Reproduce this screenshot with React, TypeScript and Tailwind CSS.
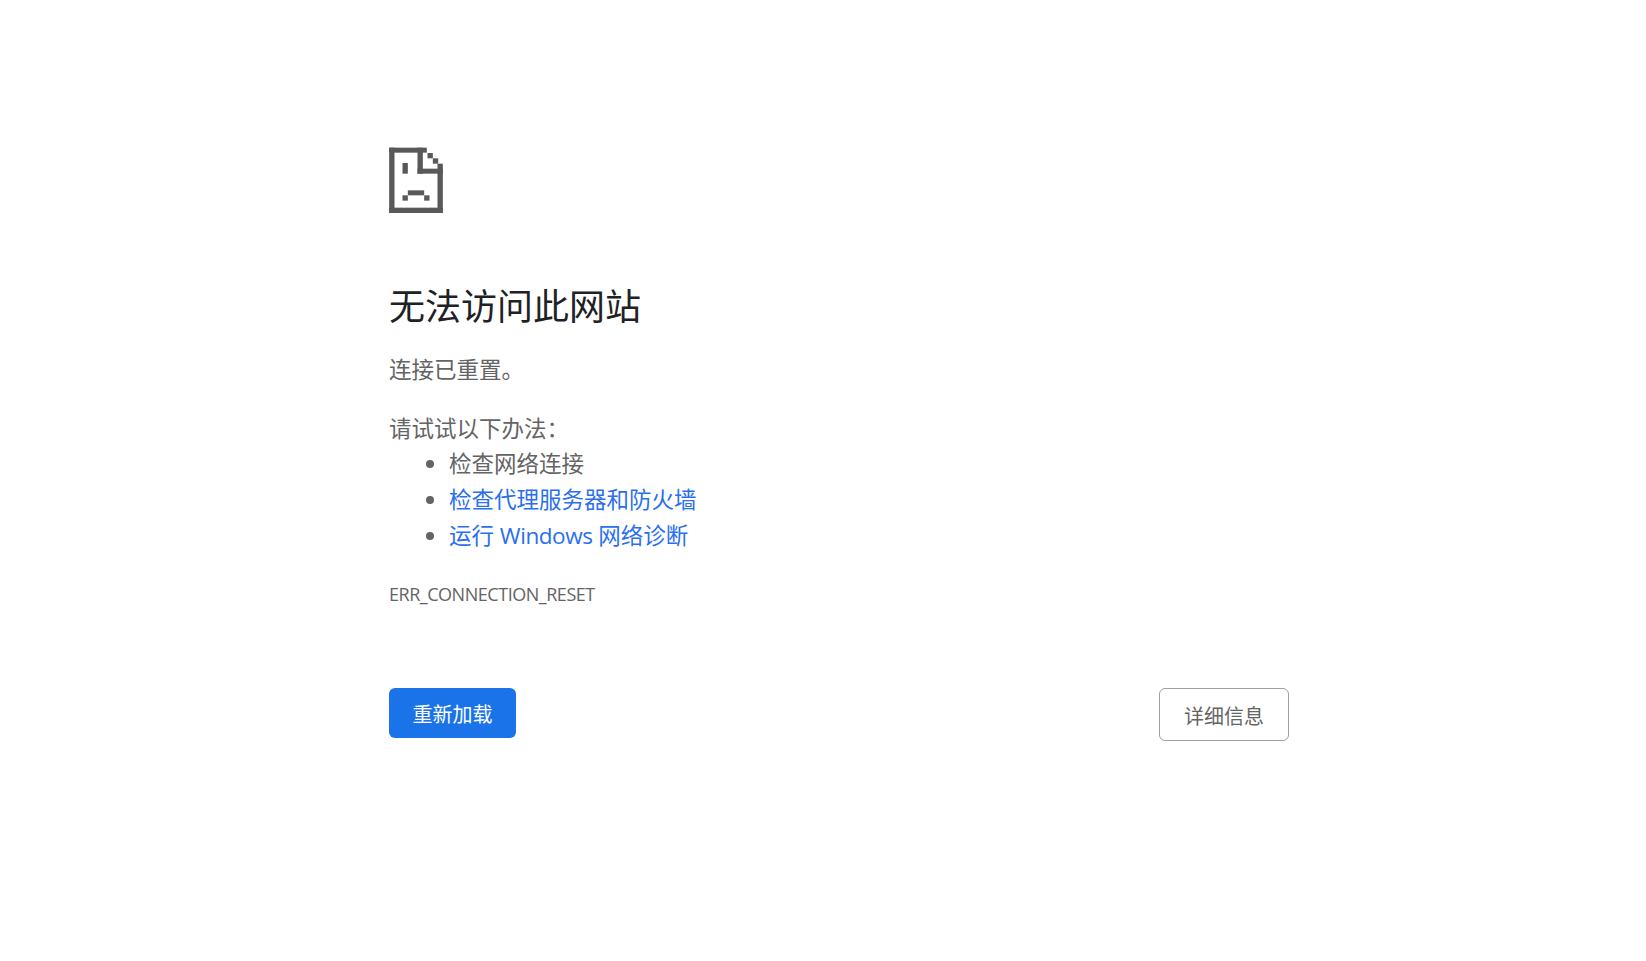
function SadFileIcon() {
  return (
    <svg width="54" height="66" viewBox="57 50 161 198" fill="#595959" aria-hidden="true">
      <rect x="57" y="52" width="113" height="15" />
      <rect x="57" y="52" width="16" height="196" />
      <rect x="57" y="232" width="161" height="16" />
      <rect x="202" y="100" width="16" height="148" />
      <rect x="142" y="52" width="16" height="78" />
      <rect x="142" y="115" width="76" height="15" />
      <rect x="172" y="68" width="16" height="16" />
      <rect x="188" y="84" width="16" height="16" />
      <rect x="97" y="98" width="16" height="32" />
      <rect x="113" y="180" width="49" height="15" />
      <rect x="97" y="195" width="16" height="16" />
      <rect x="162" y="195" width="16" height="16" />
    </svg>
  );
}

export default function App() {
  return (
    <div className="min-h-[961px] bg-white pl-[389px] pt-[147px] font-['Open_Sans','Noto_Sans_CJK_SC',sans-serif] text-[22.5px] leading-[36px] text-[#646464]">
      <div className="w-[900px]">
        <SadFileIcon />
        <h1 className="mt-[67px] text-[36px] leading-[54px] font-normal text-[#202124]">无法访问此网站</h1>
        <p className="mt-[18px]">连接已重置。</p>
        <p className="mt-[23px]">请试试以下办法：</p>
        <ul className="-mt-px list-disc pl-[60px]">
          <li>检查网络连接</li>
          <li><a href="#" className="text-[#2a6ff0]">检查代理服务器和防火墙</a></li>
          <li><a href="#" className="text-[#2a6ff0]">运行 <span className="tracking-[-0.45px]">Windows</span> 网络诊断</a></li>
        </ul>
        <div className="mt-[22px] text-[18px] tracking-[-0.47px]">ERR_CONNECTION_RESET</div>
        <div className="mt-[76px] flex items-start justify-between">
          <button className="h-[50px] w-[127px] rounded-[6px] bg-[#1a73e8] pt-[4px] text-[20px] text-white">重新加载</button>
          <button className="h-[53px] w-[130px] rounded-[6px] border border-[#9aa0a6] bg-white pt-[4px] text-[20px] text-[#646464]">详细信息</button>
        </div>
      </div>
    </div>
  );
}
